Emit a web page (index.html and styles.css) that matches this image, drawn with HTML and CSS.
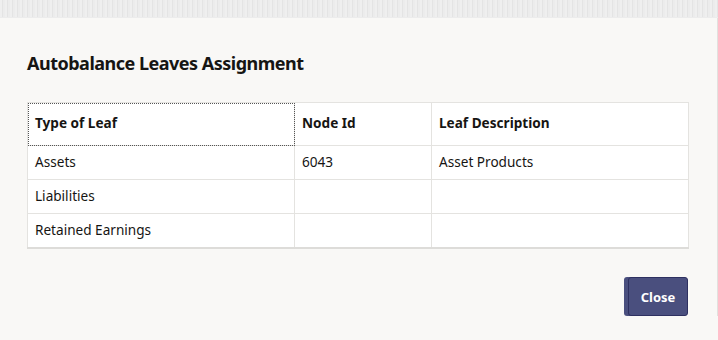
FILE: index.html
```html
<!DOCTYPE html>
<html lang="en">
<head>
    <meta charset="UTF-8">
    <title>Autobalance Leaves Assignment</title>
    <link rel="stylesheet" href="styles.css">
</head>
<body>
    <div class="backdrop"></div>
    <div class="dialog">
        <h1 class="dialog-title">Autobalance Leaves Assignment</h1>
        <table class="leaves">
            <thead>
                <tr>
                    <th class="col-type focused">Type of Leaf</th>
                    <th class="col-node">Node Id</th>
                    <th>Leaf Description</th>
                </tr>
            </thead>
            <tbody>
                <tr>
                    <td>Assets</td>
                    <td>6043</td>
                    <td>Asset Products</td>
                </tr>
                <tr>
                    <td>Liabilities</td>
                    <td></td>
                    <td></td>
                </tr>
                <tr>
                    <td>Retained Earnings</td>
                    <td></td>
                    <td></td>
                </tr>
            </tbody>
        </table>
        <div class="footer">
            <button class="btn-close">Close</button>
        </div>
    </div>
</body>
</html>
```

FILE: styles.css
```css
body {
    margin: 0;
    font-family: 'Noto Sans', 'Open Sans', sans-serif;
    background: #f9f8f6;
    color: #161513;
    width: 718px;
    height: 340px;
    overflow: hidden;
}
.backdrop {
    height: 17px;
    background-color: #e9e9e9;
    background-image: repeating-linear-gradient(90deg, #efefef 0 2px, #e4e4e4 2px 3px, #ececec 3px 5px);
    border-bottom: 1px solid #ececec;
}
.dialog {
    padding: 0 29px 0 27px;
    border-right: 1px solid #e2e1de;
}
.dialog-title {
    margin: 0;
    padding-top: 33px;
    height: 52px;
    box-sizing: border-box;
    font-size: 18px;
    font-weight: bold;
    letter-spacing: -0.5px;
}
.leaves {
    margin-top: 32px;
    width: 662px;
    border-collapse: collapse;
    background: #fff;
    font-size: 13.6px;
    border: 1px solid #e4e3e0;
    border-bottom: 2px solid #dddcd9;
}
.leaves th,
.leaves td {
    border: 1px solid #e4e3e0;
    text-align: left;
    padding: 0 7px 2px;
}
.leaves th {
    height: 38px;
    padding-bottom: 4px;
    font-weight: bold;
}
.leaves td {
    height: 31px;
}
.col-type {
    width: 252px;
}
.col-node {
    width: 122px;
}
.leaves th.focused {
    outline: 1px dotted #555;
    outline-offset: -1px;
}
.footer {
    display: flex;
    justify-content: flex-end;
    margin-top: 28px;
}
.btn-close {
    width: 60px;
    height: 39px;
    border: 1px solid #2e3060;
    border-radius: 3px;
    background: #4a4f7e;
    color: #fff;
    font-family: inherit;
    font-size: 13px;
    font-weight: bold;
    box-shadow: -4px 0 0 #4a4f7e;
    cursor: pointer;
}
```
